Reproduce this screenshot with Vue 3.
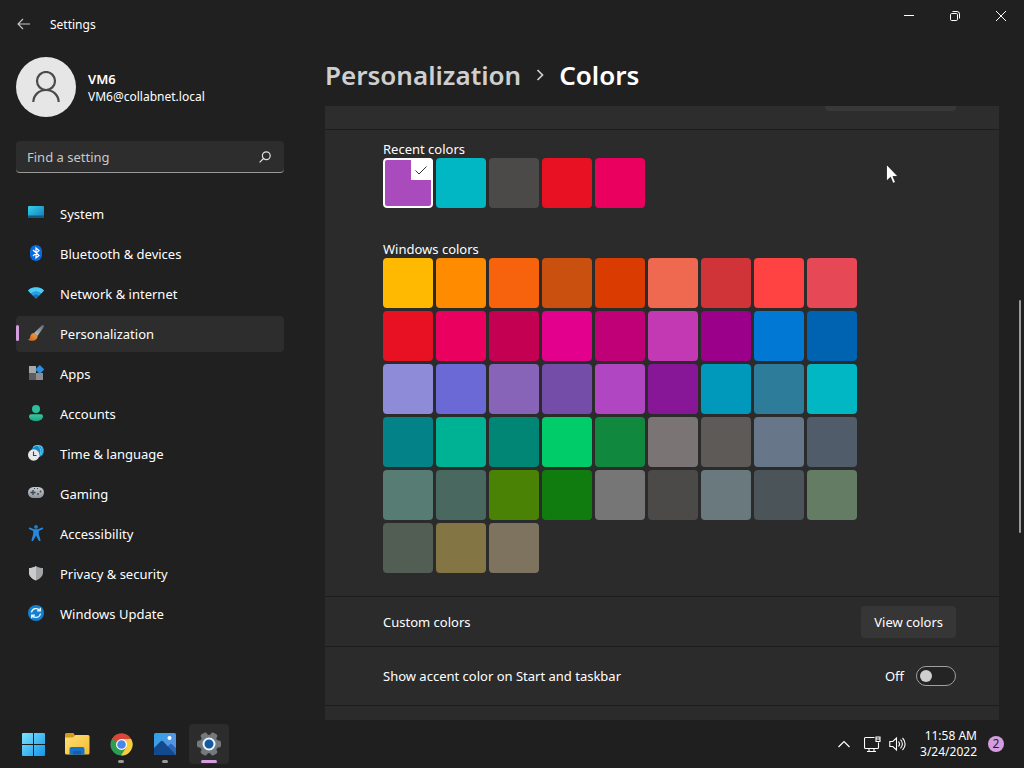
<script setup>
import { ref } from 'vue'

const search = ref('')
const page = ref('Personalization')
const accent = ref('recent-0')
const showAccent = ref(false)

const pages = [
  'System',
  'Bluetooth & devices',
  'Network & internet',
  'Personalization',
  'Apps',
  'Accounts',
  'Time & language',
  'Gaming',
  'Accessibility',
  'Privacy & security',
  'Windows Update'
]

const groups = [
  {
    id: 'recent',
    title: 'Recent colors',
    colors: ['#a94bbd', '#00b7c3', '#4c4a48', '#e81123', '#ea005e']
  },
  {
    id: 'windows',
    title: 'Windows colors',
    colors: [
      '#ffb900', '#ff8c00', '#f7630c', '#ca5010', '#da3b01', '#ef6950', '#d13438', '#ff4343', '#e74856',
      '#e81123', '#ea005e', '#c30052', '#e3008c', '#bf0077', '#c239b3', '#9a0089', '#0078d4', '#0063b1',
      '#8e8cd8', '#6b69d6', '#8764b8', '#744da9', '#b146c2', '#881798', '#0099bc', '#2d7d9a', '#00b7c3',
      '#038387', '#00b294', '#018574', '#00cc6a', '#10893e', '#7a7574', '#5d5a58', '#68768a', '#515c6b',
      '#567c73', '#486860', '#498205', '#107c10', '#767676', '#4c4a48', '#69797e', '#4a5459', '#647c64',
      '#525e54', '#847545', '#7e735f'
    ]
  }
]
</script>

<template>
  <div class="desktop">
    <div class="window">
      <header class="titlebar">
        <button class="back" aria-label="Back">
          <svg width="14" height="12" viewBox="0 0 14 12" fill="none" stroke="#c8c8c8" stroke-width="1.1">
            <path d="M13 6H1.2M6 1L1 6l5 5" />
          </svg>
        </button>
        <span class="app-name">Settings</span>
        <div class="controls">
          <button aria-label="Minimize">
            <svg width="10" height="10" viewBox="0 0 10 10" stroke="#fff"><path d="M0 4.5h10" /></svg>
          </button>
          <button aria-label="Restore">
            <svg width="10" height="10" viewBox="0 0 10 10" fill="none" stroke="#fff">
              <rect x=".5" y="2.5" width="7" height="7" rx="1.2" />
              <path d="M2.5.5H7A2.5 2.5 0 0 1 9.5 3v4.5" />
            </svg>
          </button>
          <button aria-label="Close">
            <svg width="10" height="10" viewBox="0 0 10 10" stroke="#fff"><path d="M0 0l10 10M10 0L0 10" /></svg>
          </button>
        </div>
      </header>

      <div class="body">
        <aside class="sidebar">
          <div class="user">
            <div class="avatar">
              <svg width="30" height="32" viewBox="0 0 30 32" fill="none" stroke="#4a4a4a" stroke-width="2.2">
                <circle cx="15" cy="10" r="9" />
                <path d="M2.3 31c.3-7 5.6-12 12.7-12s12.4 5 12.7 12" />
              </svg>
            </div>
            <div>
              <div class="user-name">VM6</div>
              <div class="user-mail">VM6@collabnet.local</div>
            </div>
          </div>

          <div class="search">
            <input v-model="search" type="text" placeholder="Find a setting" aria-label="Find a setting" />
            <svg width="12" height="12" viewBox="0 0 12 12" fill="none" stroke="#e0e0e0" stroke-width="1.2">
              <circle cx="7.3" cy="4.7" r="3.9" />
              <path d="M4.5 7.5L.6 11.4" />
            </svg>
          </div>

          <nav>
            <a
              v-for="name in pages"
              :key="name"
              href="#"
              :class="{ active: page === name }"
              @click.prevent="page = name"
            >
              <svg width="16" height="18" viewBox="0 1 16 18">
                <g v-if="name === 'System'">
                  <rect y="2" width="16" height="12" rx="1" fill="url(#screen)" />
                  <path d="M0 11.5h16V13a1 1 0 0 1-1 1H1a1 1 0 0 1-1-1z" fill="#125b80" />
                </g>
                <g v-else-if="name === 'Bluetooth & devices'">
                  <rect x="2" y="1" width="12" height="16" rx="6" fill="#0a6be0" />
                  <path d="M5 6l6 5.500L8 14V4l3 2.500L5 12" fill="none" stroke="#fff" stroke-width="1.2" />
                </g>
                <g v-else-if="name === 'Network & internet'">
                  <path d="M0 6.500C4 2.200 12 2.200 16 6.500L8 15z" fill="#1c6fc0" />
                  <path d="M0 6.500C4 2.200 12 2.200 16 6.500L13 9.700c-3-3-7-3-10 0z" fill="#4ccdf5" />
                  <path d="M3 9.700c3-3 7-3 10 0l-2 2c-2-1.600-4-1.600-6 0z" fill="#2a9ee0" />
                </g>
                <g v-else-if="name === 'Personalization'">
                  <path d="M15.500 1.200c.8.700.4 1.700-.2 2.500L9.500 12 6 9l7.500-7.300c.7-.6 1.400-.9 2-.5z" fill="url(#handle)" />
                  <path d="M6 9l3.500 3c.2 3-2.300 4.800-5.500 4.800-2 0-3.300-.5-4-1.300 2-.4 1.800-1.700 2.500-3.800C3 9.900 4.300 9 6 9z" fill="url(#bristle)" />
                </g>
                <g v-else-if="name === 'Apps'">
                  <path d="M1 2h7v7H1z" fill="#a5a9aa" />
                  <path d="M1 9h7v7H1z" fill="#5b5d5f" />
                  <path d="M8 9h7v7H8z" fill="#8c8f91" />
                  <rect x="8.6" y="2.3" width="6.4" height="6.4" rx=".8" transform="rotate(45 11.8 5.5)" fill="#2c8fe0" />
                </g>
                <g v-else-if="name === 'Accounts'">
                  <circle cx="8" cy="5" r="4" fill="#2cc09a" />
                  <path d="M3 10.300h10a2 2 0 0 1 2 2c0 3.200-3 4.700-7 4.700s-7-1.500-7-4.700a2 2 0 0 1 2-2z" fill="url(#person)" />
                </g>
                <g v-else-if="name === 'Time & language'">
                  <circle cx="9.8" cy="7" r="6.2" fill="#1686c6" />
                  <path d="M5 3.500c3-3 7-2.500 9.500.5M9 1c4 3 5 7 2 12M13 1.800c1.500 3 1.800 6 .5 9" fill="none" stroke="#5fd3f4" />
                  <circle cx="5.7" cy="11" r="5.7" fill="#e6e8ea" />
                  <path d="M5.500 7.500v4h3" fill="none" stroke="#444" stroke-width="1.1" />
                </g>
                <g v-else-if="name === 'Gaming'">
                  <rect y="3" width="16" height="11" rx="5.5" fill="url(#pad)" />
                  <path d="M2.500 8.500h5M5 6v5" stroke="#40454a" stroke-width="1.3" />
                  <circle cx="10" cy="10" r=".9" fill="#40454a" />
                  <circle cx="12.5" cy="7.5" r=".9" fill="#40454a" />
                  <path d="M6 4.500h1M9 4.500h1" stroke="#40454a" />
                </g>
                <g v-else-if="name === 'Accessibility'">
                  <circle cx="8" cy="2.9" r="1.9" fill="#1d7fce" />
                  <path d="M2 3.500l4 1.800h4l4-1.800c1.200-.3 1.700 1.200.6 1.800L10.800 7v3l1.700 6c.2 1.200-1.300 1.500-1.800.5L8 11.500l-2.700 5c-.5 1-2 .7-1.800-.5l1.700-6V7L1.400 5.300C.3 4.700.8 3.200 2 3.500z" fill="#2689dc" />
                </g>
                <g v-else-if="name === 'Privacy & security'">
                  <path d="M8 2c2 1.400 4.500 2 7 2v4.500c0 3.500-2.500 6-7 8-4.500-2-7-4.500-7-8V4c2.500 0 5-.6 7-2z" fill="#a3a5a7" />
                  <path d="M8 2v14.500c-4.500-2-7-4.500-7-8V4c2.500 0 5-.6 7-2z" fill="#c9cbcc" />
                </g>
                <g v-else>
                  <circle cx="8" cy="9" r="8" fill="#1380d2" />
                  <path d="M3.500 8.500a4.600 4.600 0 0 1 8.300-2M12.500 9.500a4.600 4.600 0 0 1-8.300 2M12.300 3.700v3.200H9M3.700 14.300v-3.200H7" fill="none" stroke="#e8f7ff" stroke-width="1.3" />
                </g>
              </svg>
              {{ name }}
            </a>
          </nav>
        </aside>

        <main class="content">
          <h1>
            <a href="#">Personalization</a>
            <svg width="8" height="12" viewBox="0 0 8 12" fill="none" stroke="#cfcfcf" stroke-width="1.7">
              <path d="M1.500 1l5 5-5 5" />
            </svg>
            <span>Colors</span>
          </h1>

          <div class="panel">
            <div class="row clipped"><div class="clipped-select"></div></div>

            <section class="colors">
              <fieldset v-for="group in groups" :key="group.id">
                <legend>{{ group.title }}</legend>
                <div class="swatches">
                  <label
                    v-for="(color, i) in group.colors"
                    :key="i"
                    class="swatch"
                    :style="{ backgroundColor: color }"
                  >
                    <input v-model="accent" type="radio" name="accent" :value="group.id + '-' + i" :aria-label="color" />
                    <span v-if="accent === group.id + '-' + i" class="tick">
                      <svg width="12" height="9" viewBox="0 0 12 9" fill="none" stroke="#333">
                        <path d="M.5 4.500l3.500 3.500 7.500-7.500" />
                      </svg>
                    </span>
                  </label>
                </div>
              </fieldset>
            </section>

            <div class="row custom">
              <span>Custom colors</span>
              <button class="view">View colors</button>
            </div>

            <div class="row accent">
              <label for="show-accent">Show accent color on Start and taskbar</label>
              <span class="state">{{ showAccent ? 'On' : 'Off' }}</span>
              <input id="show-accent" v-model="showAccent" class="toggle" type="checkbox" />
            </div>

            <div class="row next"></div>
          </div>
        </main>
      </div>

      <div class="scrollbar"></div>
    </div>

    <footer class="taskbar">
      <div class="apps">
        <button aria-label="Start">
          <svg width="23" height="23" viewBox="0 0 23 23" fill="url(#win)">
            <path d="M0 1a1 1 0 0 1 1-1h10v11H0zM12 0h10a1 1 0 0 1 1 1v10H12zM0 12h11v11H1a1 1 0 0 1-1-1zM12 12h11v10a1 1 0 0 1-1 1H12z" />
          </svg>
        </button>
        <button aria-label="File Explorer">
          <svg width="26" height="24" viewBox="0 0 26 24">
            <path d="M1 2.500A1.500 1.500 0 0 1 2.500 1h7l2 3v4H1z" fill="#d39a1c" />
            <path d="M1 5.500h8l2.500-2.500H24a1.500 1.500 0 0 1 1.500 1.500V21a1.500 1.500 0 0 1-1.500 1.500H2.500A1.500 1.500 0 0 1 1 21z" fill="url(#folder)" />
            <path d="M5.500 22.500V17a2 2 0 0 1 2-2h11a2 2 0 0 1 2 2v5.500z" fill="#1673c8" />
            <path d="M9 22.500v-2.500a1 1 0 0 1 1-1h6a1 1 0 0 1 1 1v2.500z" fill="#125fb2" />
          </svg>
        </button>
        <button aria-label="Chrome" class="running">
          <svg width="23" height="23" viewBox="0 0 24 24">
            <circle cx="12" cy="12" r="11.5" fill="#2e9d54" />
            <path d="M12 12L2 6.300A11.500 11.500 0 0 1 22 6.300H12z" fill="#dc4437" />
            <path d="M12 6.300h10A11.500 11.500 0 0 1 11.500 23.500L17 14.900z" fill="#fbcb3b" />
            <circle cx="12" cy="12" r="5.7" fill="#fff" />
            <circle cx="12" cy="12" r="4.5" fill="#4a85ea" />
          </svg>
        </button>
        <button aria-label="Photos" class="running">
          <svg width="24" height="24" viewBox="0 0 24 24">
            <rect x="1" y="1" width="22" height="22" rx="1.5" fill="url(#sky)" />
            <path d="M12 17l6-5.500 5 4.500v5.500a1.500 1.500 0 0 1-1.500 1.500H12z" fill="#2b68b8" />
            <path d="M1 16l6.500-6.500a2 2 0 0 1 2.800 0L22.500 22.500l-1 .5h-19A1.500 1.500 0 0 1 1 21.500z" fill="#134a8e" />
            <circle cx="16.5" cy="6" r="2" fill="#fff" />
          </svg>
        </button>
        <button aria-label="Settings" class="running current">
          <svg width="24" height="24" viewBox="0 0 24 24">
            <g fill="#74797e">
              <rect x="8.5" y="0" width="7" height="24" rx="2" transform="rotate(30 12 12)" />
              <rect x="8.5" y="0" width="7" height="24" rx="2" transform="rotate(90 12 12)" />
              <rect x="8.5" y="0" width="7" height="24" rx="2" transform="rotate(150 12 12)" />
              <circle cx="12" cy="12" r="9.3" />
            </g>
            <circle cx="12" cy="12" r="5.5" fill="#12599f" stroke="#eef6fb" stroke-width="2" />
          </svg>
        </button>
      </div>

      <div class="tray">
        <svg class="chevron" width="12" height="8" viewBox="0 0 12 8" fill="none" stroke="#fff" stroke-width="1.2">
          <path d="M.5 7L6 1.500 11.500 7" />
        </svg>
        <svg width="17" height="17" viewBox="0 0 17 17" fill="none" stroke="#fff" stroke-width="1.1">
          <path d="M10.500 1.500h-9a1 1 0 0 0-1 1v9a1 1 0 0 0 1 1h12a1 1 0 0 0 1-1V6.500M5 12.500v3M10 12.500v3M3 15.500h9" />
          <path d="M12 1h4v4.500h-4zM12 3h4" />
        </svg>
        <svg width="17" height="16" viewBox="0 0 17 16" fill="none" stroke="#fff" stroke-width="1.1">
          <path d="M.8 5.500h3L7.500 2v12L3.800 10.500h-3zM9.500 5.500c1.300 1.500 1.300 3.500 0 5M11.500 3.700c2.500 2.500 2.500 6.100 0 8.600M13.500 2c3.500 3.400 3.500 8.600 0 12" />
        </svg>
        <div class="clock">
          <div>11:58 AM</div>
          <div>3/24/2022</div>
        </div>
        <span class="badge">2</span>
      </div>
    </footer>

    <svg class="cursor" width="12" height="20" viewBox="0 0 12 20">
      <path d="M.5.500v16.500l4-3.700 2.500 6 2.500-1-2.500-5.800h5z" fill="#fff" stroke="#111" stroke-width=".7" />
    </svg>

    <svg class="defs" width="0" height="0" aria-hidden="true">
      <defs>
        <linearGradient id="screen" x2="1" y2="1"><stop stop-color="#35d0e8" /><stop offset="1" stop-color="#1479bd" /></linearGradient>
        <linearGradient id="handle" x1="1" x2="0" y2="1"><stop stop-color="#5c6670" /><stop offset="1" stop-color="#c5ccd2" /></linearGradient>
        <linearGradient id="bristle" x1="1" x2="0" y2="1"><stop stop-color="#f7a44c" /><stop offset="1" stop-color="#c95f12" /></linearGradient>
        <linearGradient id="person" x2="0" y2="1"><stop stop-color="#35c8a0" /><stop offset="1" stop-color="#1fa585" /></linearGradient>
        <linearGradient id="pad" x2="0" y2="1"><stop stop-color="#c6cbd0" /><stop offset="1" stop-color="#8c949b" /></linearGradient>
        <linearGradient id="win" x2="1" y2="1"><stop stop-color="#7de3fa" /><stop offset="1" stop-color="#1295ec" /></linearGradient>
        <linearGradient id="folder" x2="1" y2="1"><stop stop-color="#ffe07a" /><stop offset="1" stop-color="#f4bb2d" /></linearGradient>
        <linearGradient id="sky" x2="1" y2="1"><stop stop-color="#2ba3e8" /><stop offset="1" stop-color="#6d8ee0" /></linearGradient>
      </defs>
    </svg>
  </div>
</template>

<style>
body {
  background: #202020;
}
</style>

<style scoped>
* {
  box-sizing: border-box;
}

.desktop {
  position: relative;
  display: flex;
  flex-direction: column;
  height: 100vh;
  overflow: hidden;
  background: #202020;
  color: #fff;
  font-family: "Noto Sans", "Open Sans", sans-serif;
  font-size: 13px;
  line-height: 20px;
}

button {
  display: flex;
  align-items: center;
  justify-content: center;
  padding: 0;
  border: none;
  background: none;
  color: inherit;
  font: inherit;
}

a {
  color: inherit;
  text-decoration: none;
}

.window {
  position: relative;
  display: flex;
  flex: 1;
  flex-direction: column;
  min-height: 0;
}

.titlebar {
  display: flex;
  align-items: center;
  height: 48px;
}

.back {
  width: 48px;
  height: 48px;
}

.app-name {
  padding: 2px 0 0 2px;
  font-size: 12px;
}

.controls {
  display: flex;
  align-self: flex-start;
  margin-left: auto;
}

.controls button {
  width: 46px;
  height: 32px;
}

.body {
  display: flex;
  flex: 1;
  min-height: 0;
}

.sidebar {
  width: 300px;
  padding: 9px 16px 0;
}

.user {
  display: flex;
  align-items: center;
  gap: 12px;
  margin-bottom: 24px;
}

.avatar {
  display: flex;
  align-items: center;
  justify-content: center;
  width: 60px;
  height: 60px;
  border-radius: 50%;
  background: #e6e6e6;
}

.user-name {
  font-weight: 600;
  line-height: 20px;
}

.user-mail {
  font-size: 12px;
  line-height: 16px;
}

.search {
  display: flex;
  align-items: center;
  height: 32px;
  margin-bottom: 23px;
  padding: 0 13px 0 11px;
  border-bottom: 1px solid #9a9a9a;
  border-radius: 4px;
  background: #2d2d2d;
}

.search input {
  flex: 1;
  min-width: 0;
  padding: 0;
  border: none;
  outline: none;
  background: none;
  color: #fff;
  font: inherit;
}

.search input::placeholder {
  color: #c8c8c8;
  opacity: 1;
}

nav {
  display: flex;
  flex-direction: column;
  gap: 4px;
}

nav a {
  position: relative;
  display: flex;
  align-items: center;
  gap: 16px;
  height: 36px;
  padding-left: 12px;
  border-radius: 4px;
}

nav a.active {
  background: #2d2d2d;
}

nav a.active::before {
  content: "";
  position: absolute;
  top: 9px;
  left: 0;
  width: 3px;
  height: 16px;
  border-radius: 2px;
  background: #d59ddf;
}

.content {
  display: flex;
  flex: 1;
  flex-direction: column;
  padding: 8px 25px 0;
}

h1 {
  display: flex;
  align-items: center;
  gap: 15px;
  margin: 0 0 12px;
  font-size: 26px;
  font-weight: 600;
  line-height: 38px;
}

h1 a {
  color: #cfcfcf;
}

.panel {
  display: flex;
  flex: 1;
  flex-direction: column;
  min-height: 0;
  overflow: hidden;
  background: #2b2b2b;
}

.row {
  display: flex;
  flex-shrink: 0;
  align-items: center;
  padding: 0 43px 0 58px;
  border-bottom: 1px solid #1c1c1c;
}

.clipped {
  align-items: flex-start;
  justify-content: flex-end;
  height: 24px;
  background: #2d2d2d;
}

.clipped-select {
  width: 131px;
  height: 5px;
  border-radius: 0 0 4px 4px;
  background: #383838;
}

.colors {
  display: flex;
  flex-direction: column;
  flex-shrink: 0;
  gap: 30px;
  padding: 8px 58px 23px;
  border-bottom: 1px solid #1c1c1c;
}

fieldset {
  margin: 0;
  padding: 0;
  border: none;
}

legend {
  padding: 2px 0 0;
  line-height: 18px;
}

.swatches {
  display: grid;
  grid-template-columns: repeat(9, 50px);
  gap: 3px;
}

.swatch {
  position: relative;
  height: 50px;
  overflow: hidden;
  border-radius: 4px;
}

.swatch input {
  display: block;
  width: 100%;
  height: 100%;
  margin: 0;
  border-radius: 4px;
  appearance: none;
}

.swatch input:checked {
  border: 2px solid #fff;
}

.tick {
  position: absolute;
  top: 0;
  right: 0;
  display: flex;
  align-items: center;
  justify-content: center;
  width: 22px;
  height: 22px;
  padding: 2px 2px 0 0;
  background: #fff;
}

.custom {
  height: 50px;
  justify-content: space-between;
}

.view {
  height: 32px;
  padding: 0 13px;
  border-radius: 4px;
  background: #363636;
}

.accent {
  height: 59px;
}

.state {
  margin-left: auto;
}

.toggle {
  display: flex;
  align-items: center;
  width: 40px;
  height: 20px;
  margin: 0 0 0 12px;
  padding: 0 3px;
  border: 1px solid #a0a0a0;
  border-radius: 10px;
  background: #242424;
  appearance: none;
}

.toggle::before {
  content: "";
  width: 12px;
  height: 12px;
  border-radius: 50%;
  background: #cfcfcf;
}

.toggle:checked {
  justify-content: flex-end;
  background: #d59ddf;
}

.next {
  height: 60px;
}

.scrollbar {
  position: absolute;
  top: 300px;
  right: 3px;
  width: 2px;
  height: 233px;
  border-radius: 1px;
  background: #9a9a9a;
}

.taskbar {
  display: flex;
  align-items: center;
  justify-content: space-between;
  height: 48px;
  padding: 0 20px 0 13px;
  background: #1f1f1f;
}

.apps {
  display: flex;
  gap: 4px;
}

.apps button {
  position: relative;
  width: 40px;
  height: 40px;
  border-radius: 4px;
}

.apps .current {
  background: #2c2c2c;
}

.apps .running::after {
  content: "";
  position: absolute;
  bottom: 1px;
  left: 50%;
  width: 6px;
  height: 3px;
  border-radius: 2px;
  background: #9a9a9a;
  transform: translateX(-50%);
}

.apps .current::after {
  width: 16px;
  background: #d59ddf;
}

.tray {
  display: flex;
  align-items: center;
  gap: 8px;
}

.chevron {
  margin-right: 6px;
}

.clock {
  margin-left: 6px;
  font-size: 12px;
  line-height: 16px;
  text-align: right;
}

.badge {
  width: 16px;
  height: 16px;
  margin-left: 3px;
  border-radius: 50%;
  background: #d59ddf;
  color: #222;
  font-size: 12px;
  line-height: 16px;
  text-align: center;
}

.cursor {
  position: absolute;
  top: 164px;
  left: 886px;
  pointer-events: none;
}

.defs {
  position: absolute;
}
</style>
